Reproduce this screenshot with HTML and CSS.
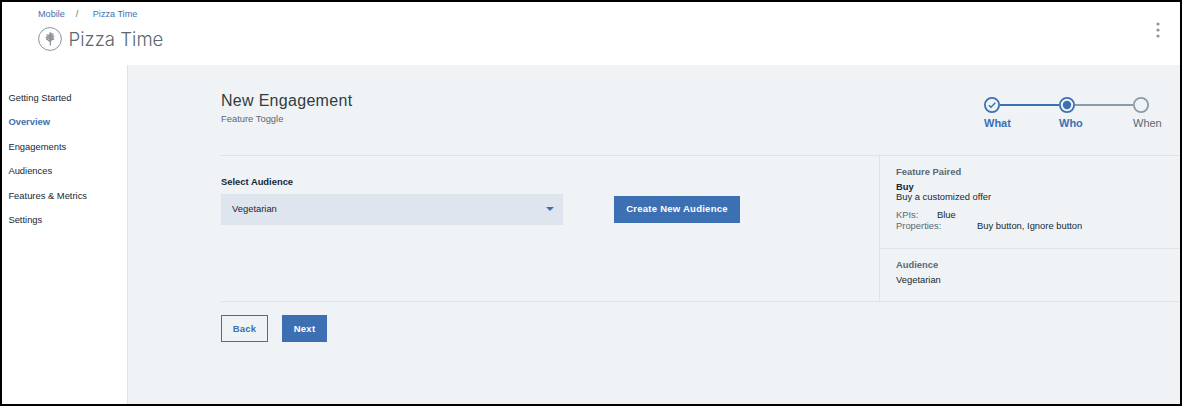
FILE: index.html
```html
<!DOCTYPE html>
<html lang="en">
<head>
<meta charset="utf-8">
<title>Pizza Time</title>
<link rel="stylesheet" href="styles.css">
</head>
<body>
<div class="app">
  <header class="header">
    <div class="identity">
      <nav class="crumbs"><a>Mobile</a><span>/</span><a>Pizza Time</a></nav>
      <div class="title-row">
        <svg class="logo" width="24" height="24" viewBox="0 0 24 24">
          <circle cx="12" cy="12" r="11.4" fill="#fff" stroke="#8494a0"/>
          <g fill="#999fa4">
            <path d="M12.6 4.6l1.2 1.8 2-.2-.6 1.8 1.6 1.4-1.4.8.4 2-2.2-.2-1.4 1.4-1.4-1.2-2.4.8.2-1.8-1.6-.8 1.8-1.2-.4-2 2.2.2z"/>
            <circle cx="9" cy="12.2" r="1.1"/><circle cx="15.2" cy="12" r="1.1"/>
          </g>
          <path d="M12.3 7.5v11M12.3 14.8L9.6 12.6M12.3 14l2.6-2.2" fill="none" stroke="#848b90" stroke-width="1.2"/>
        </svg>
        <h1>Pizza Time</h1>
      </div>
    </div>
    <svg class="more" width="4" height="16" viewBox="0 0 4 16" fill="#8796a1">
      <circle cx="2" cy="2" r="1.6"/><circle cx="2" cy="8" r="1.6"/><circle cx="2" cy="14" r="1.6"/>
    </svg>
  </header>
  <div class="body">
    <nav class="sidebar">
      <a>Getting Started</a>
      <a class="active">Overview</a>
      <a>Engagements</a>
      <a>Audiences</a>
      <a>Features &amp; Metrics</a>
      <a>Settings</a>
    </nav>
    <main class="main">
      <section class="intro">
        <div>
          <h2>New Engagement</h2>
          <p class="subtitle">Feature Toggle</p>
        </div>
        <div class="stepper">
          <svg width="166" height="16" viewBox="0 0 166 16" fill="none" stroke-width="2">
            <path d="M16 8h59" stroke="#3d70b2"/>
            <path d="M91 8h58" stroke="#8c9ba5"/>
            <circle cx="8" cy="8" r="7.1" stroke="#3d70b2" stroke-width="1.8"/>
            <path d="M4.8 8.3L7 10.3l4.3-4.5" stroke="#3d70b2" stroke-width="1.4"/>
            <circle cx="83" cy="8" r="7.1" stroke="#3d70b2" stroke-width="1.8"/>
            <circle cx="83" cy="8" r="4.2" fill="#3d70b2"/>
            <circle cx="157" cy="8" r="7.1" stroke="#8c9ba5" stroke-width="1.8"/>
          </svg>
          <div class="step-labels"><b>What</b><b>Who</b><span>When</span></div>
        </div>
      </section>
      <section class="content">
        <div class="form">
          <div class="field">
            <label>Select Audience</label>
            <div class="select"><span>Vegetarian</span>
              <svg width="8" height="4" viewBox="0 0 8 4"><path d="M0 0h8L4 4z" fill="#3d70b2"/></svg>
            </div>
          </div>
          <button class="btn primary create">Create New Audience</button>
        </div>
        <aside class="summary">
          <div class="paired">
            <h3>Feature Paired</h3>
            <p class="name">Buy</p>
            <p class="desc">Buy a customized offer</p>
            <dl><dt class="kpi">KPIs:</dt><dd>Blue</dd></dl>
            <dl><dt class="prop">Properties:</dt><dd>Buy button, Ignore button</dd></dl>
          </div>
          <div class="audience">
            <h3>Audience</h3>
            <p>Vegetarian</p>
          </div>
        </aside>
      </section>
      <footer class="actions">
        <button class="btn outline">Back</button>
        <button class="btn primary next">Next</button>
      </footer>
    </main>
  </div>
</div>
</body>
</html>
```
FILE: styles.css
```css
* { box-sizing: border-box; margin: 0; padding: 0; }
body {
  font: 9.4px/12px "Liberation Sans", Arial, sans-serif;
  color: #152935;
}
.app {
  width: 1182px;
  height: 406px;
  border: 2px solid #000;
  background: #fff;
  display: flex;
  flex-direction: column;
}
.header {
  height: 63px;
  padding: 6px 20px 0 36px;
  display: flex;
  justify-content: space-between;
}
.crumbs { display: flex; font-size: 9.1px; color: #3d70b2; }
.crumbs span { width: 28px; padding-left: 11px; color: #5a6872; }
.title-row { display: flex; align-items: center; gap: 6.6px; margin-top: 7px; }
.logo { display: block; }
h1 {
  font: 300 18.6px/24px Inter, "Liberation Sans", sans-serif;
  color: #5a6872;
}
.more { margin-top: 14px; }
.body { flex: 1; display: flex; }
.sidebar {
  width: 126px;
  padding: 21px 0 0 6.4px;
  border-right: 1px solid #dfe3e6;
  display: flex;
  flex-direction: column;
}
.sidebar a { height: 24.4px; line-height: 24px; }
.sidebar .active { font-weight: bold; color: #3d70b2; }
.main { flex: 1; background: #eff3f6; padding-left: 93px; }
.intro {
  height: 91px;
  border-bottom: 1px solid #dfe3e6;
  padding: 25px 15px 0 0;
  display: flex;
  justify-content: space-between;
}
h2 { font-size: 16px; line-height: 21px; font-weight: normal; letter-spacing: .3px; color: #323c41; }
.subtitle { margin-top: 2px; color: #5a6872; }
.stepper { width: 181px; padding-top: 7px; }
.stepper svg { display: block; }
.step-labels {
  display: grid;
  grid-template-columns: 75px 74px 32px;
  font-size: 11px;
  line-height: 14px;
  margin-top: 3px;
  color: #3d70b2;
}
.step-labels span { color: #5a6872; }
.content { height: 146px; display: flex; border-bottom: 1px solid #dfe3e6; }
.form { width: 658px; display: flex; gap: 51px; align-items: flex-start; }
.field { padding-top: 20px; }
.field label { display: block; font-weight: bold; }
.select {
  width: 342px;
  height: 31px;
  margin-top: 6px;
  padding: 0 9px 1px 11px;
  background: #dfe5ef;
  border-bottom: 1px solid #dde3e9;
  display: flex;
  align-items: center;
  justify-content: space-between;
}
.btn {
  height: 27px;
  border: 1px solid #3d70b2;
  font: bold 9.5px/25px "Liberation Sans", Arial, sans-serif;
  letter-spacing: .25px;
  text-align: center;
}
.primary { background: #3d70b2; color: #fff; }
.outline { width: 47px; background: transparent; color: #3d70b2; }
.create { width: 126px; margin-top: 40px; padding-bottom: 1px; line-height: 24px; }
.next { width: 45px; }
.summary { flex: 1; border-left: 1px solid #dfe3e6; }
.paired { height: 93px; padding: 10px 0 0 16px; border-bottom: 1px solid #dfe3e6; }
h3 { font-size: 9.4px; line-height: 12px; color: #5a6872; }
.name { font-weight: bold; line-height: 10px; margin-top: 4px; }
.desc { line-height: 10px; margin-bottom: 7px; }
dl { display: flex; line-height: 11px; }
dt { color: #5a6872; }
.kpi { width: 41px; }
.prop { width: 81px; }
.audience { padding: 10px 0 0 16px; }
.audience p { margin-top: 3px; }
.actions { display: flex; gap: 14px; padding-top: 13px; }
```
